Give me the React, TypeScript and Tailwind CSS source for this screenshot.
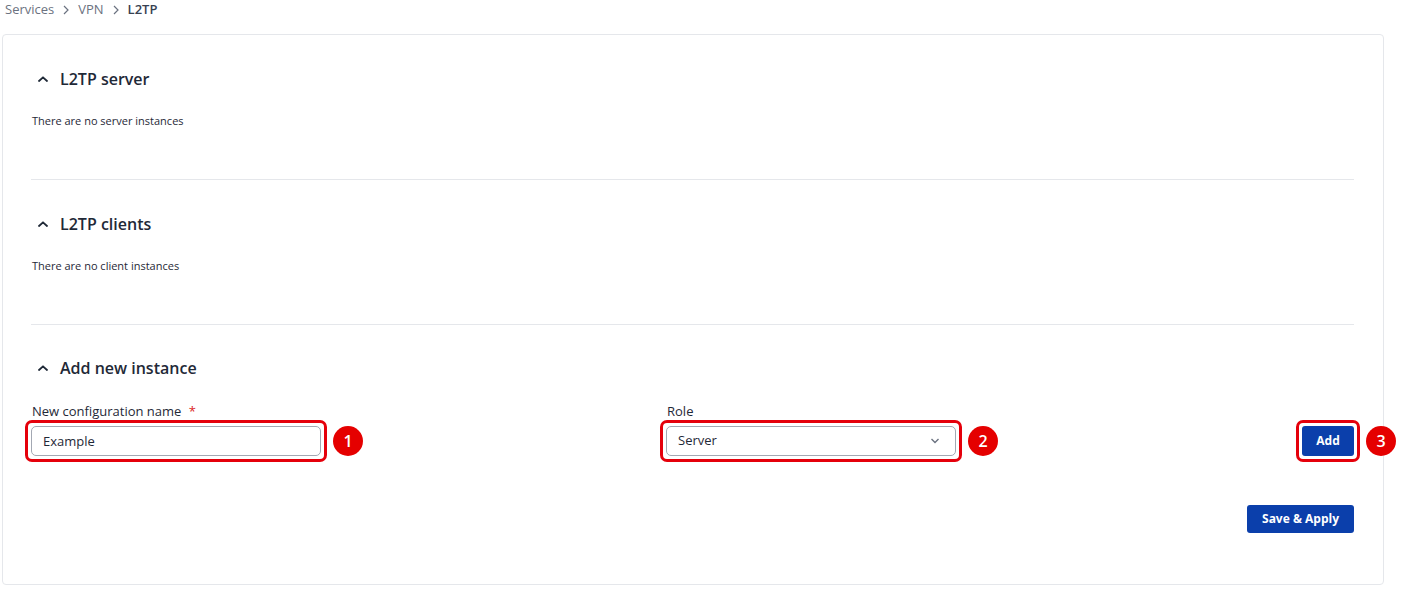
import React from "react";

const Chevron = ({ className }: { className?: string }) => (
  <svg width="10" height="6" viewBox="0 0 10 6" className={className} fill="none">
    <polyline points="1,5 5,1.3 9,5" stroke="currentColor" strokeWidth="1.8" strokeLinecap="round" strokeLinejoin="round" />
  </svg>
);

const Badge = ({ n }: { n: number }) => (
  <span className="absolute left-[calc(100%+12px)] top-1/2 -translate-y-1/2 flex h-[30px] w-[30px] items-center justify-center rounded-full bg-[#e50000] text-[16px] font-semibold text-white">
    {n}
  </span>
);

const Marked = ({ n, children }: { n: number; children: React.ReactNode }) => (
  <div className="relative">
    {children}
    <span className="pointer-events-none absolute -inset-[6px] rounded-[7px] border-[3px] border-[#e5000b]" aria-hidden="true" />
    <Badge n={n} />
  </div>
);

const SectionHead = ({ title }: { title: string }) => (
  <div className="flex h-6 items-center">
    <Chevron className="ml-[7px] text-[#1f2937]" />
    <h2 className="ml-[12px] text-[16px] font-semibold text-[#1f2937]">{title}</h2>
  </div>
);

const EmptySection = ({ title, note }: { title: string; note: string }) => (
  <div className="border-b border-[#e5e7eb] pt-8 pb-[50px]">
    <SectionHead title={title} />
    <p className="mt-[22px] pl-[1px] text-[11px] leading-4 text-[#1f2937]">{note}</p>
  </div>
);

export default function App() {
  return (
    <div className="min-h-[591px] bg-white font-['Open_Sans',sans-serif]">
      <nav className="flex h-5 items-center pl-[5px] text-[13px]">
        <span className="text-[#6b7280]">Services</span>
        <svg width="8" height="10" viewBox="0 0 8 10" className="mx-[8px] text-[#6b7280]" fill="none">
          <polyline points="2,1 6,5 2,9" stroke="currentColor" strokeWidth="1.2" />
        </svg>
        <span className="text-[#6b7280]">VPN</span>
        <svg width="8" height="10" viewBox="0 0 8 10" className="mx-[8px] text-[#6b7280]" fill="none">
          <polyline points="2,1 6,5 2,9" stroke="currentColor" strokeWidth="1.2" />
        </svg>
        <span className="font-semibold text-[#374151]">L2TP</span>
      </nav>

      <div className="ml-[2px] mt-[14px] w-[1382px] rounded-[4px] border border-[#e5e7eb] pl-[28px] pr-[29px] pb-[51px]">
        <EmptySection title="L2TP server" note="There are no server instances" />
        <EmptySection title="L2TP clients" note="There are no client instances" />

        <div className="pt-[31px]">
          <SectionHead title="Add new instance" />
          <div className="mt-[22px] flex items-end">
            <div className="w-[635px]">
              <label className="block pl-[1px] text-[13px] leading-[18px] text-[#1f2937]">
                New configuration name <span className="ml-[4px] text-[#dc2626]">*</span>
              </label>
              <div className="mt-[6px] w-[290px]">
                <Marked n={1}>
                  <input
                    defaultValue="Example"
                    className="h-[30px] w-full rounded-[5px] border border-[#a3a8b3] px-[11px] text-[13px] text-[#1f2937] outline-none"
                  />
                </Marked>
              </div>
            </div>
            <div className="w-[290px]">
              <label className="block pl-[1px] text-[13px] leading-[18px] text-[#1f2937]">Role</label>
              <div className="mt-[6px]">
                <Marked n={2}>
                  <div className="flex h-[30px] w-full items-center justify-between rounded-[5px] border border-[#a3a8b3] pl-[11px] pr-[15px] text-[13px] text-[#1f2937]">
                    <span>Server</span>
                    <svg width="10" height="6" viewBox="0 0 10 6" fill="none" className="text-[#6b7280]">
                      <polyline points="1.5,1 5,4.5 8.5,1" stroke="currentColor" strokeWidth="1.4" />
                    </svg>
                  </div>
                </Marked>
              </div>
            </div>
            <div className="ml-auto">
              <Marked n={3}>
                <button className="h-[30px] w-[52px] rounded-[3px] bg-[#0b3fab] text-[12px] font-bold text-white">Add</button>
              </Marked>
            </div>
          </div>

          <div className="mt-[49px] flex justify-end">
            <button className="h-[28px] w-[107px] rounded-[3px] bg-[#0b3fab] text-[12px] font-bold text-white">
              Save &amp; Apply
            </button>
          </div>
        </div>
      </div>
    </div>
  );
}
